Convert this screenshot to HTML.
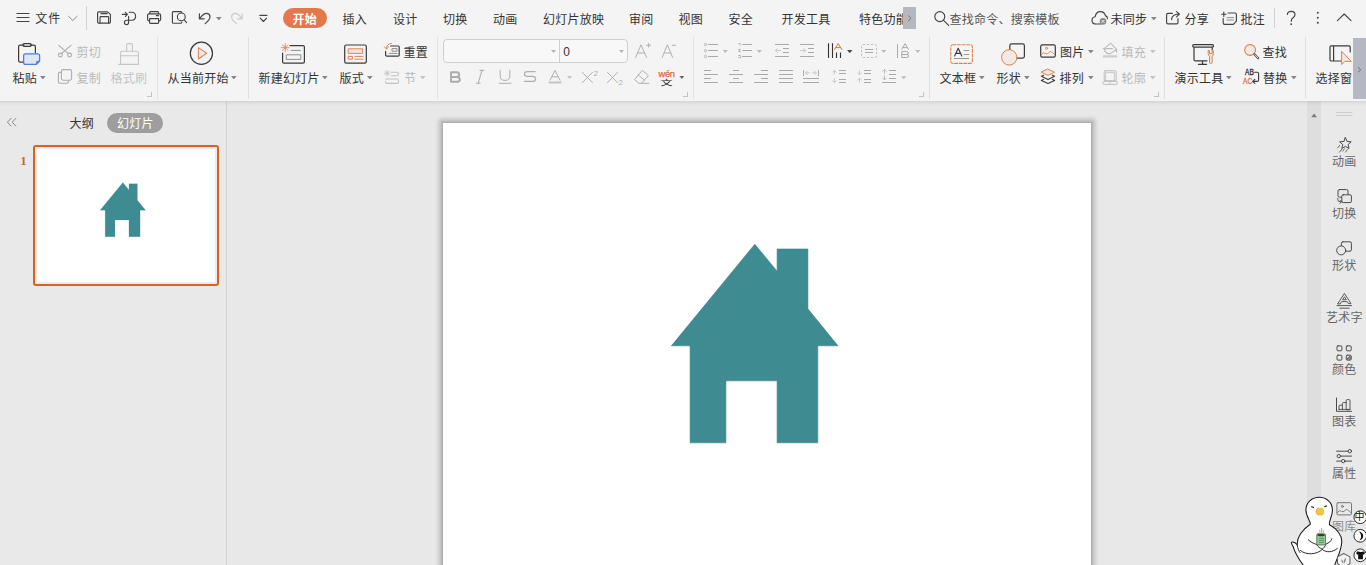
<!DOCTYPE html>
<html lang="zh-CN">
<head>
<meta charset="utf-8">
<title>WPS 演示</title>
<style>
html,body{margin:0;padding:0}
body{width:1366px;height:565px;overflow:hidden;position:relative;background:#e8e8e8;font-family:"Liberation Sans","Noto Sans CJK SC",sans-serif;font-size:12px;color:#333}
#ribbon{position:absolute;left:0;top:0;width:1366px;height:101px;background:#f4f4f4}
#rsh{position:absolute;left:0;top:101px;width:1366px;height:5px;background:linear-gradient(rgba(0,0,0,.085),rgba(0,0,0,.03) 50%,rgba(0,0,0,0))}
.t{position:absolute;white-space:nowrap;line-height:16px;height:16px;font-size:12px;color:#333;letter-spacing:.25px}
.d{color:#b9b9b9}
.g{color:#666}
svg{position:absolute;overflow:visible}
.sep{position:absolute;width:1px;background:#e0e0e0;top:37px;height:62px}
.arr{position:absolute;width:5.6px;height:3.4px;background:#858585;clip-path:polygon(0 0,100% 0,50% 100%)}
.arr.d{background:#c4c4c4}
.arr.k{background:#444}
.cm{position:absolute;width:4px;height:4px;border-right:1px solid #c4c4c4;border-bottom:1px solid #c4c4c4}
#left{position:absolute;left:0;top:101px;width:226px;height:464px;background:#e9e9e9;border-right:1px solid #d4d4d4}
#slide{position:absolute;left:443px;top:123px;width:648px;height:486px;background:#fff;}
.sh{position:absolute}
#vscroll{position:absolute;left:1307px;top:101px;width:14px;height:464px;background:#dedede}
#right{position:absolute;left:1321px;top:101px;width:45px;height:464px;background:#e9e9e9}
</style>
</head>
<body>
<div id="left"></div>
<div class="sh" style="left:443px;top:115px;width:648px;height:8px;background:linear-gradient(to top,rgba(0,0,0,.27),rgba(0,0,0,.15) 30%,rgba(0,0,0,.06) 65%,rgba(0,0,0,0))"></div>
<div class="sh" style="left:435px;top:123px;width:8px;height:442px;background:linear-gradient(to left,rgba(0,0,0,.27),rgba(0,0,0,.15) 30%,rgba(0,0,0,.06) 65%,rgba(0,0,0,0))"></div>
<div class="sh" style="left:1091px;top:123px;width:8px;height:442px;background:linear-gradient(to right,rgba(0,0,0,.27),rgba(0,0,0,.15) 30%,rgba(0,0,0,.06) 65%,rgba(0,0,0,0))"></div>
<div class="sh" style="left:435px;top:115px;width:8px;height:8px;background:radial-gradient(circle at 100% 100%,rgba(0,0,0,.27),rgba(0,0,0,.15) 2.4px,rgba(0,0,0,.06) 5.2px,rgba(0,0,0,0) 8px)"></div>
<div class="sh" style="left:1091px;top:115px;width:8px;height:8px;background:radial-gradient(circle at 0 100%,rgba(0,0,0,.27),rgba(0,0,0,.15) 2.4px,rgba(0,0,0,.06) 5.2px,rgba(0,0,0,0) 8px)"></div>
<div id="slide"></div>
<svg id="house" style="left:0;top:0" width="1366" height="565" viewBox="0 0 1366 565"><path fill="#3e8c92" stroke="#36858c" stroke-width="0.6" d="M671.4 345.8 L754.8 244.2 L777.1 271.2 V249 H807.9 V308.8 L838 345.8 H817.8 V442.8 H777.1 V380.8 H725.9 V442.8 H690.1 V345.8 Z"/></svg>
<div id="vscroll"></div>
<div id="right"></div>
<div id="rsh"></div>
<div id="ribbon">
<!--TOPBAR-START-->
<!-- top bar -->
<svg style="left:0;top:0" width="300" height="36" viewBox="0 0 300 36" fill="none" stroke="#444" stroke-width="1.15" stroke-linecap="round" stroke-linejoin="round">
<path d="M16.5 13.5H29.5M16.5 17.5H29.5M16.5 21.5H29.5" stroke-linecap="butt"/>
<path d="M68.5 16.3L72.8 20.5L77.1 16.3" stroke="#8c8c8c" stroke-width="1"/>
<!-- save -->
<path d="M98.6 11.8H107.6L110.4 14.4V22.1Q110.4 23.1 109.4 23.1H98.6Q97.6 23.1 97.6 22.1V12.8Q97.6 11.8 98.6 11.8Z"/>
<path d="M101 13.6H107.2M100 23V17.4Q100 16.6 100.8 16.6H107.8Q108.6 16.6 108.6 17.4V23"/>
<!-- pdf -->
<path d="M122.3 14.3H127.2M125.4 12.3L127.4 14.3L125.4 16.3"/>
<path d="M128.6 22.4V16.4M129.2 12.2H131.6Q135.6 12.2 135.6 16.2Q135.6 20.2 131.6 20.2H126.8Q124.4 20.2 124.4 22.4Q124.4 24.6 126.5 24.6Q128.6 24.6 128.6 22.4"/>
<!-- print -->
<path d="M149.8 13.6V12.4Q149.8 11.6 150.6 11.6H157.6Q158.4 11.6 158.4 12.4V13.6"/>
<path d="M149.4 20.8H148.8Q147.6 20.8 147.6 19.6V15Q147.6 13.8 148.8 13.8H159.4Q160.6 13.8 160.6 15V19.6Q160.6 20.8 159.4 20.8H158.8"/>
<path d="M149.6 18.6H158.6V22.4Q158.6 23.4 157.6 23.4H150.6Q149.6 23.4 149.6 22.4Z M156.4 15.6H158.6"/>
<!-- preview -->
<path d="M181.8 12.6V12.6Q181.8 11.6 180.8 11.6H173.4Q172.4 11.6 172.4 12.6V22.2Q172.4 23.2 173.4 23.2H180.8Q181.6 23.2 181.8 22.4"/>
<circle cx="181.3" cy="16.9" r="3.9"/>
<path d="M184.2 19.8L186.6 22.6"/>
<!-- undo -->
<path d="M199.4 13.8V18.8H204.2"/>
<path d="M199.8 18.4Q203.4 13.2 207 13.4Q210 13.8 210 17Q210 19.6 205.2 23.6"/>
<!-- redo -->
<g stroke="#cbcbcb" transform="translate(-0.8 0)"><path d="M243 13.8V18.8H238.2"/><path d="M242.6 18.4Q239 13.2 235.4 13.4Q232.4 13.8 232.4 17Q232.4 19.6 237.2 23.6"/></g>
<!-- more -->
<path d="M259.8 15.3H267 M260.2 18.2L263.4 21.5L266.6 18.2"/>
</svg>
<div class="t" style="left:35.3px;top:11px;letter-spacing:1px">文件</div>
<div style="position:absolute;left:86px;top:6px;width:1px;height:24px;background:#d2d2d2"></div>
<div class="arr" style="left:216px;top:17px"></div>
<div style="position:absolute;left:283px;top:8px;width:44px;height:20px;border-radius:10px;background:#e4784b"></div>
<div class="t" style="left:292.5px;top:11.5px;color:#fff;font-weight:bold">开始</div>
<div class="t" style="left:342.5px;top:11.5px">插入</div>
<div class="t" style="left:393px;top:11.5px">设计</div>
<div class="t" style="left:443px;top:11.5px">切换</div>
<div class="t" style="left:493px;top:11.5px">动画</div>
<div class="t" style="left:543px;top:11.5px">幻灯片放映</div>
<div class="t" style="left:629px;top:11.5px">审阅</div>
<div class="t" style="left:678.5px;top:11.5px">视图</div>
<div class="t" style="left:728.5px;top:11.5px">安全</div>
<div class="t" style="left:781.5px;top:11.5px">开发工具</div>
<div class="t" style="left:859px;top:11.5px;width:44px;overflow:hidden">特色功能</div>
<div style="position:absolute;left:903px;top:7px;width:13px;height:22px;background:#b5b7c1"></div>
<svg style="left:903px;top:7px" width="13" height="22" viewBox="0 0 13 22" fill="none" stroke="#777" stroke-width="1"><path d="M5.2 8.4L8 11.2L5.2 14"/></svg>
<svg style="left:920px;top:0" width="446" height="36" viewBox="920 0 446 36" fill="none" stroke="#444" stroke-width="1.15" stroke-linecap="round" stroke-linejoin="round">
<circle cx="939.8" cy="16.6" r="5"/><path d="M943.6 20.4L948.6 25.4"/>
<!-- cloud -->
<path d="M1101 24H1096.4Q1092 24 1092 20.4Q1092 17.2 1095.2 16.8Q1095.8 11.6 1100.4 11.6Q1104.4 11.6 1105.4 15.6Q1107.6 16.4 1107.4 18.6"/>
<circle cx="1103" cy="21.4" r="3.3" fill="#8a8a8a" stroke="none"/>
<path d="M1101.8 20.2L1104.2 22.6M1104.2 20.2L1101.8 22.6" stroke="#f4f4f4" stroke-width="0.9"/>
<!-- share -->
<path d="M1172.4 13.4H1168Q1166.6 13.4 1166.6 14.8V22.4Q1166.6 23.8 1168 23.8H1176.6Q1178 23.8 1178 22.4V18.6"/>
<path d="M1171.6 19.6Q1171.8 14.4 1178.8 14M1176.4 11.6L1179.4 14L1176.6 16.8"/>
<!-- comment -->
<path d="M1221.6 14.2H1226M1223.8 12V16.4"/>
<path d="M1228 13H1235Q1236.4 13 1236.4 14.4V21.2L1233.4 24.4H1224.6Q1223.2 24.4 1223.2 23V18.4"/>
<path d="M1227 20H1233.6M1227 17.6H1233.6" stroke-width="0.8" stroke="#777"/>
<!-- help -->
<path d="M1287.4 14.4Q1287.6 11.4 1291.2 11.4Q1295 11.4 1295 14.6Q1295 16.4 1293 17.8Q1291.2 19 1291.2 21.2" stroke-width="1.2"/>
<circle cx="1291.2" cy="24.2" r="0.9" fill="#444" stroke="none"/>
<g fill="#444" stroke="none"><circle cx="1317.8" cy="12.8" r="1"/><circle cx="1317.8" cy="17.8" r="1"/><circle cx="1317.8" cy="22.8" r="1"/></g>
<path d="M1337.4 20.6L1344.2 14L1351 20.6"/>
</svg>
<div class="t" style="left:949.5px;top:11.5px;color:#555">查找命令、搜索模板</div>
<div class="t" style="left:1110.5px;top:11.5px">未同步</div>
<div class="arr" style="left:1151px;top:17px"></div>
<div class="t" style="left:1184.5px;top:11.5px">分享</div>
<div class="t" style="left:1240.5px;top:11.5px">批注</div>
<div style="position:absolute;left:1274px;top:8px;width:1px;height:20px;background:#d2d2d2"></div>
<!--TOPBAR-END-->
<!--R1-START-->
<!-- ribbon group 1: clipboard -->
<svg style="left:0;top:36px" width="250" height="65" viewBox="0 36 250 65" fill="none" stroke="#3a3a3a" stroke-width="1.2" stroke-linecap="round" stroke-linejoin="round">
<!-- paste -->
<path d="M24 45.2H20.2Q18.6 45.2 18.6 46.8V60.6Q18.6 62.2 20.2 62.2H23"/>
<path d="M30.4 45.2H33.8Q35.4 45.2 35.4 46.8V53"/>
<rect x="23" y="43.6" width="8.2" height="2.8" rx="1.2"/>
<path d="M25.6 53.8H37.6Q39.6 53.8 39.6 55.8V61L36.4 64.4H25.6Q23.6 64.4 23.6 62.4V55.8Q23.6 53.8 25.6 53.8Z" fill="#dfe6f3" stroke="#4a80dc" stroke-width="1.3"/>
<path d="M39.4 61.2H37.2Q36.4 61.2 36.4 62V64.2Z" fill="#4a80dc" stroke="#4a80dc" stroke-width="0.6"/>
<!-- scissors -->
<g stroke="#adadad" stroke-width="1.1"><path d="M58.8 45.4L68.4 53.6M71 45.4L61.4 53.6"/><circle cx="60.4" cy="55" r="1.9"/><circle cx="69.6" cy="55" r="1.9"/></g>
<!-- copy -->
<g stroke="#adadad" stroke-width="1.1"><rect x="61.4" y="69.6" width="10.2" height="10.6" rx="1.6"/><path d="M61.2 72.4H59.8Q58.4 72.4 58.4 73.8V81.8Q58.4 83.2 59.8 83.2H67Q68.4 83.2 68.4 81.8V80.4"/></g>
<!-- format brush -->
<g stroke="#c6c6c6" stroke-width="1.1"><path d="M126.6 51.2V44.8Q126.6 43.6 127.8 43.6H131.2Q132.4 43.6 132.4 44.8V51.2"/><path d="M120.6 64.2V52.4Q120.6 51.2 121.8 51.2H137.2Q138.4 51.2 138.4 52.4V64.2M120.6 55.8H138.4M118.6 64.4H138.6"/></g>
<!-- play -->
<circle cx="201.4" cy="53.3" r="11.1" stroke="#3a3a3a" stroke-width="1.2"/>
<path d="M198.4 47.6V59L206.6 53.3Z" fill="#f6e8e1" stroke="#e0875c" stroke-width="1.1"/>
</svg>
<div class="t" style="left:12.5px;top:71px">粘贴</div><div class="arr" style="left:40px;top:76px"></div>
<div class="t d" style="left:76.5px;top:45px">剪切</div>
<div class="t d" style="left:76.5px;top:71px">复制</div>
<div class="t d" style="left:110.5px;top:71px;color:#c4c4c4">格式刷</div>
<div class="cm" style="left:147px;top:92px"></div>
<div class="sep" style="left:157px"></div>
<div class="t" style="left:167.5px;top:71px">从当前开始</div><div class="arr" style="left:231px;top:76px"></div>
<div class="sep" style="left:248px"></div>
<!--R1-END-->
<!--R2-START-->
<!-- ribbon group 2: slides -->
<svg style="left:250px;top:36px" width="190" height="65" viewBox="250 36 190 65" fill="none" stroke="#3a3a3a" stroke-width="1.2" stroke-linecap="round" stroke-linejoin="round">
<!-- new slide -->
<path d="M290 45.6H303Q304.4 45.6 304.4 47V61.8Q304.4 63.2 303 63.2H284Q282.6 63.2 282.6 61.8V53"/>
<path d="M291 50.4H300.4" stroke="#8e8e8e" stroke-width="1"/>
<rect x="286.6" y="54.8" width="14.2" height="4.6" stroke="#8e8e8e" stroke-width="1"/>
<path d="M285.2 43.6V51.8M281.2 47.7H289.2M282.4 44.9L288 50.5M288 44.9L282.4 50.5" stroke="#e08356" stroke-width="0.9"/>
<!-- layout -->
<rect x="344.7" y="45" width="21.6" height="18.2" rx="1.6"/>
<rect x="348.6" y="48.8" width="14" height="4.6" fill="#f3e6df" stroke="#e08356" stroke-width="1"/>
<rect x="348.6" y="56.4" width="3.8" height="2.8" stroke="#e08356" stroke-width="1"/>
<path d="M355 56.4H363M355 59.2H363" stroke="#e08356" stroke-width="1"/>
<!-- reset -->
<path d="M390.6 46H398Q399.2 46 399.2 47.2V55Q399.2 56.2 398 56.2H386.8Q385.6 56.2 385.6 55V51.4"/>
<rect x="392.4" y="48.6" width="4.6" height="2.6" stroke="#8e8e8e" stroke-width="1"/>
<path d="M389.2 53.4H397" stroke="#8e8e8e" stroke-width="1"/>
<path d="M391.4 43.4Q386.6 43.6 386.4 48.6M384.4 46.8L386.4 49L388.6 47" stroke="#e08356" stroke-width="1"/>
<!-- section (disabled) -->
<g stroke="#c2c2c2" stroke-width="1.1">
<path d="M387.2 70.4V76M384.4 73.2H390M385.2 71.2L389.2 75.2M389.2 71.2L385.2 75.2" stroke-width="0.8"/>
<path d="M391.4 72.2H397.2Q398.4 72.2 398.4 73.4V74.6Q398.4 75.8 397.2 75.8H391.4"/>
<path d="M385.6 79H397.2Q398.4 79 398.4 80.2V82.2Q398.4 83.4 397.2 83.4H386.8Q385.6 83.4 385.6 82.2V81.4"/>
</g>
</svg>
<div class="t" style="left:258.5px;top:71px">新建幻灯片</div><div class="arr" style="left:322px;top:76px"></div>
<div class="t" style="left:339.5px;top:71px">版式</div><div class="arr" style="left:367px;top:76px"></div>
<div class="t" style="left:403.5px;top:45px">重置</div>
<div class="t d" style="left:404px;top:71px">节</div><div class="arr d" style="left:420px;top:76px"></div>
<div class="sep" style="left:437px"></div>
<!--R2-END-->
<!--R3-START-->
<!-- ribbon group 3: font -->
<div style="position:absolute;left:443px;top:39px;width:183px;height:22px;border:1px solid #cfcfcf;border-radius:4px;background:#f8f8f8"></div>
<div style="position:absolute;left:559px;top:40px;width:1px;height:22px;background:#cfcfcf"></div>
<div class="arr" style="left:551px;top:50px;width:5px;height:3px;background:#b4b4b4"></div>
<div class="arr" style="left:619px;top:50px;width:5px;height:3px;background:#b4b4b4"></div>
<div class="t" style="left:563.3px;top:44px;font-size:12px">0</div>
<svg style="left:440px;top:36px" width="255" height="65" viewBox="440 36 255 65" fill="none" stroke="#b0b0b0" stroke-width="1" stroke-linecap="round" stroke-linejoin="round">
<!-- A+ A- -->
<path d="M635.6 57.4L641 44.8L646.6 57.4M637.6 53H644.6M646.6 45.3H650.6M648.6 43.4V47.2"/>
<path d="M662.2 57.4L667.4 44.8L672.6 57.4M664 53H670.8M672.2 45.3H675.6"/>
<!-- B -->
<path d="M451 72.2H456.4Q459.2 72.2 459.2 74.6Q459.2 77 456.4 77H451M451 77H456.8Q459.8 77 459.8 79.4Q459.8 81.8 456.8 81.8H451V72.2Z" stroke-width="1.9" stroke="#ababab"/>
<!-- I -->
<path d="M480 70.4H483.8M476.4 83.2H480.2M481.9 70.4L478.3 83.2" stroke-width="1.1"/>
<!-- U -->
<path d="M500.2 70.2V76Q500.2 80.4 505 80.4Q509.8 80.4 509.8 76V70.2M499.2 83.3H511" />
<!-- S -->
<path d="M535.2 71.6H527.4Q524.4 71.6 524.4 74Q524.4 76.4 527.4 76.4H532.6Q535.6 76.4 535.6 78.9Q535.6 81.4 532.6 81.4H524.4" stroke-width="1.2"/>
<!-- A color -->
<path d="M550 80.2L555 70.4L560 80.2M551.8 76.8H558.2"/>
<path d="M549.4 82.5H560.6" stroke-width="2.2" stroke="#c4c4c4"/>
<!-- X2 -->
<path d="M582.4 72.4L592.4 82.6M592.4 72.4L582.4 82.6"/>
<path d="M607.4 72.4L617.4 82.6M617.4 72.4L607.4 82.6"/>
<!-- eraser -->
<path d="M642.6 70.6L648.4 75.6L641.6 83.2H638.6L634.8 79.8ZM638 74.8L644.6 80.2M641.6 83.3H648.8"/>
<!-- wen underline -->
</svg>
<div class="t" style="left:593.5px;top:66.3px;font-size:8px;color:#b0b0b0">2</div>
<div class="t" style="left:618.4px;top:74.5px;font-size:8px;color:#b0b0b0">2</div>
<div class="t" style="left:658.6px;top:65.6px;font-size:9.3px;color:#d56f38;letter-spacing:-0.35px;-webkit-text-stroke:.25px #d56f38">wén</div>
<div class="t" style="left:660.5px;top:70.8px;font-size:12px;color:#222;transform:scaleY(.58);transform-origin:50% 100%">文</div>
<div class="arr d" style="left:567px;top:76px;width:5px;height:3px"></div>
<div class="arr k" style="left:679px;top:75.5px;background:#666"></div>
<div class="cm" style="left:683px;top:92px"></div>
<div class="sep" style="left:693px"></div>
<!--R3-END-->
<!--R4-START-->
<!-- ribbon group 4: paragraph -->
<svg style="left:695px;top:36px" width="235" height="65" viewBox="695 36 235 65" fill="none" stroke="#a9a9a9" stroke-width="1" stroke-linecap="butt" stroke-linejoin="round">
<!-- bullets -->
<g stroke-width="0.8"><circle cx="705.5" cy="44.5" r="1.2"/><circle cx="705.5" cy="50.5" r="1.2"/><circle cx="705.5" cy="56.5" r="1.2"/></g>
<path d="M708.2 44.5H718M708.2 50.5H718M708.2 56.5H718"/>
<!-- numbering -->
<path d="M738.2 43.6H740.2V45.8M738.2 49.4H740.8M738.2 51.6H740.8M739.5 49.4V51.6M738.2 55.4H740.6V57.6H738.2" stroke-width="0.8"/>
<path d="M742.2 44.5H752M742.2 50.5H752M742.2 56.5H752"/>
<!-- outdent -->
<path d="M775 44.5H789M783 48.5H789M783 52.5H789M775 56.5H789"/>
<path d="M775.4 50.5H781M777.6 48.2L775.3 50.5L777.6 52.8" stroke="#c4c4c4" stroke-width="0.9"/>
<!-- indent -->
<path d="M800 44.5H814M808 48.5H814M808 52.5H814M800 56.5H814"/>
<path d="M800 50.5H805.6M803.4 48.2L805.7 50.5L803.4 52.8" stroke="#c4c4c4" stroke-width="0.9"/>
<!-- text direction -->
<path d="M828.5 43.2V58M832.5 43.2V58M836.5 52.4V58M840.5 52.4V58" stroke="#333" stroke-width="1.1"/>
<path d="M834.4 49.8L838.2 43.6L842 49.8M835.6 47.6H840.8" stroke="#d9763f" stroke-width="1"/>
<!-- align text box -->
<rect x="861.5" y="44.5" width="15" height="13" rx="1.5" stroke="#c2c2c2" stroke-dasharray="2.4 1.6"/>
<path d="M865 49.5H873M865 52.5H873"/>
<!-- |AB -->
<path d="M897.5 44.2V58"/>
<path d="M901.6 49.6L905.1 43.6L908.6 49.6M902.8 47.6H907.4"/>
<path d="M901.8 51.5H906.4Q908.4 51.5 908.4 53Q908.4 54.5 906.4 54.5H901.8M901.8 54.5H906.6Q908.7 54.5 908.7 56Q908.7 57.5 906.6 57.5H901.8V51.5"/>
<!-- row 2 aligns -->
<path d="M704 70.5H711M704 74.5H718M704 78.5H711M704 82.5H718"/>
<path d="M733 70.5H739M729 74.5H743M733 78.5H739M729 82.5H743"/>
<path d="M761 70.5H768M754 74.5H768M761 78.5H768M754 82.5H768"/>
<path d="M779 70.5H793M779 74.5H793M779 78.5H793M779 82.5H793"/>
<path d="M803.5 70V76M818.5 70V76" stroke-width="1"/>
<path d="M803 78.5H819M803 82.5H819"/>
<path d="M805.6 72.8H809.8M807.6 70.8L805.6 72.8L807.6 74.8M812.2 72.8H816.4M814.4 70.8L816.4 72.8L814.4 74.8" stroke="#c4c4c4" stroke-width="0.9"/>
<!-- line spacing 1 -->
<path d="M839 70.5H846M839 73.5H846M839 79.5H846M839 82.5H846"/>
<path d="M834.4 70.6V74.8M832.2 72.6L834.4 70.4L836.6 72.6M834.4 78.2V82.4M832.2 80.4L834.4 82.6L836.6 80.4" stroke="#c4c4c4" stroke-width="0.9"/>
<!-- line spacing 2 -->
<path d="M864 70.5H871M864 73.5H871M864 79.5H871M864 82.5H871"/>
<path d="M859.5 70.4V74.6M857.3 72.6L859.5 74.8L861.7 72.6M859.5 78.4V82.6M857.3 80.4L859.5 78.2L861.7 80.4" stroke="#c4c4c4" stroke-width="0.9"/>
<!-- line spacing 3 -->
<path d="M889 70.5H896M889 74.5H896M889 78.5H896M882 82.5H896"/>
<path d="M884.5 69.6V73.8M882.3 71.6L884.5 69.4L886.7 71.6M884.5 75.4V79.8M882.3 77.8L884.5 80L886.7 77.8" stroke="#b8b8b8" stroke-width="0.9"/>
</svg>
<div class="arr d" style="left:722.5px;top:50px;width:5.5px;height:3px;background:#bdbdbd"></div>
<div class="arr d" style="left:756.5px;top:50px;width:5.5px;height:3px;background:#bdbdbd"></div>
<div class="arr k" style="left:847px;top:50px;width:5.5px;height:3.2px;background:#4a4a4a"></div>
<div class="arr d" style="left:881px;top:50px;width:5.5px;height:3px;background:#bdbdbd"></div>
<div class="arr d" style="left:915px;top:50px;width:5.5px;height:3px;background:#bdbdbd"></div>
<div class="arr d" style="left:901px;top:76.2px;width:5.5px;height:3px;background:#bdbdbd"></div>
<div class="cm" style="left:919px;top:92px"></div>
<div class="sep" style="left:929px"></div>
<!--R4-END-->
<!--R5-START-->
<!-- ribbon group 5: drawing -->
<svg style="left:930px;top:36px" width="436" height="65" viewBox="930 36 436 65" fill="none" stroke="#3a3a3a" stroke-width="1.2" stroke-linecap="round" stroke-linejoin="round">
<!-- text box -->
<rect x="950.8" y="44.8" width="21.6" height="18.6" rx="2" stroke="#d9824f" stroke-width="1.1" stroke-dasharray="3 1.6"/>
<path d="M954.6 56L958.2 48.2L961.8 56M955.8 53.4H960.6" stroke-width="1.1"/>
<path d="M964 50.5H968.8M964 54.5H968.8M954.2 58.5H968.8" stroke="#9a9a9a" stroke-width="1"/>
<!-- shapes -->
<rect x="1009.8" y="43.9" width="14.6" height="14.2" rx="1.8"/>
<circle cx="1009.3" cy="57.4" r="7.7" fill="#f3e9e4" stroke="#d9824f" stroke-width="1"/>
<!-- picture -->
<rect x="1040.7" y="44.8" width="14.6" height="12.4" rx="1.6"/>
<circle cx="1046.5" cy="48.3" r="1.1" stroke="#d9824f" stroke-width="0.9"/>
<path d="M1041.4 54.6Q1043.4 51.6 1045.4 53.4Q1047 54.8 1048.4 53Q1050.4 50.2 1052.4 52.4L1054.8 54.8" stroke="#d9824f" stroke-width="0.9"/>
<!-- arrange -->
<path d="M1048 69.2L1054.6 72.3L1048 75.4L1041.4 72.3Z" fill="#f6e6dd" stroke="#d9824f" stroke-width="1"/>
<path d="M1043.6 75.2L1041.4 76.3L1048 79.5L1054.6 76.3L1052.4 75.2M1043.6 79.3L1041.4 80.4L1048 83.6L1054.6 80.4L1052.4 79.3" stroke-width="1.1"/>
<!-- fill (disabled) -->
<g stroke="#bdbdbd" stroke-width="1.1">
<path d="M1110.6 43.2L1116.4 49.2L1110.4 53.6H1107.6Q1103.8 51.6 1104.6 48.4ZM1103.2 48.6H1112.4M1116.6 49.4V52.2"/>
<path d="M1104 56.4H1116" stroke="#cdcdcd" stroke-width="2.4"/>
</g>
<!-- outline (disabled) -->
<g stroke="#bdbdbd" stroke-width="1">
<rect x="1104.2" y="70.8" width="12" height="10.2" rx="1"/><rect x="1106" y="72.6" width="8.4" height="8.4" stroke-width="0.8"/>
<rect x="1102.8" y="81.2" width="14.6" height="3.2" rx="1.6"/><path d="M1108.6 84.2L1111.6 81.4" stroke-width="0.8"/>
</g>
<!-- presentation tool -->
<rect x="1192.7" y="44.6" width="20.8" height="2.6" rx="1.2"/>
<path d="M1194 47.4V59.4Q1194 60.8 1195.4 60.8H1207M1212.2 47.4V50M1202.5 61V64.2M1198.4 64.3H1206.6"/>
<path d="M1208.2 50.8V53.6Q1208.2 55.4 1209.5 56.4V62.2Q1209.5 63.5 1210.8 63.5Q1212.1 63.5 1212.1 62.2V56.4Q1213.4 55.4 1213.4 53.6V50.8H1212.1V53.6H1209.5V50.8Z" fill="#f6e6dd" stroke="#d9824f" stroke-width="1"/>
<!-- find -->
<circle cx="1250.1" cy="50" r="5.4" fill="#f3e9e4" stroke="#d9824f" stroke-width="1.1"/>
<path d="M1254.4 54.2L1258.2 58.2" stroke-width="2.2" stroke="#555"/>
<path d="M1254.8 54.6L1257.8 57.8" stroke-width="0.8" stroke="#f4f4f4"/>
<!-- replace -->
<path d="M1254.6 72.2H1257.2Q1258.6 72.2 1258.6 73.6V80Q1258.6 81.4 1257.2 81.4H1253M1254.8 79.4L1252.6 81.4L1254.8 83.4" stroke-width="1.1"/>
<!-- select pane -->
<path d="M1349 45.8Q1350.2 45.8 1350.2 47V52M1341 61H1331.2Q1330 61 1330 59.8V47Q1330 45.8 1331.2 45.8H1349M1333.6 46V61" />
<path d="M1341.6 51.6V64.6L1344.8 61.4H1350.8Z" fill="#f6e6dd" stroke="#d9824f" stroke-width="1"/>
</svg>
<div class="t" style="left:1245px;top:64.3px;font-size:8.6px;color:#333;-webkit-text-stroke:.35px #333;transform:scaleX(.76);transform-origin:0 0">AB</div>
<div class="t" style="left:1242.8px;top:72.5px;font-size:8.6px;color:#d9763f;-webkit-text-stroke:.35px #d9763f;transform:scaleX(.76);transform-origin:0 0">AC</div>
<div class="t" style="left:939.5px;top:71px">文本框</div><div class="arr" style="left:979px;top:76px"></div>
<div class="t" style="left:996.5px;top:71px">形状</div><div class="arr" style="left:1024px;top:76px"></div>
<div class="t" style="left:1060px;top:45px">图片</div><div class="arr" style="left:1088px;top:50px"></div>
<div class="t" style="left:1059.5px;top:71px">排列</div><div class="arr" style="left:1088px;top:76px"></div>
<div class="t d" style="left:1121.5px;top:45px">填充</div><div class="arr d" style="left:1150px;top:50px"></div>
<div class="t d" style="left:1121.5px;top:71px">轮廓</div><div class="arr d" style="left:1150px;top:76px"></div>
<div class="cm" style="left:1154px;top:92px"></div>
<div class="sep" style="left:1164px"></div>
<div class="t" style="left:1174.5px;top:71px">演示工具</div><div class="arr" style="left:1226px;top:76px"></div>
<div class="t" style="left:1262.5px;top:45px">查找</div>
<div class="t" style="left:1263px;top:71px">替换</div><div class="arr" style="left:1291px;top:76px"></div>
<div class="sep" style="left:1305px"></div>
<div class="t" style="left:1315.5px;top:71px;width:36px;overflow:hidden">选择窗格</div>
<div style="position:absolute;left:1353px;top:38px;width:13px;height:61px;background:#b5b8c2"></div>
<svg style="left:1353px;top:38px" width="13" height="61" viewBox="0 0 13 61" fill="none" stroke="#6f7177" stroke-width="1"><path d="M5 29.4L7.8 31.8L5 34.2"/></svg>
<!--R5-END-->
<!--ROW-->
</div>
<!--LP-START-->
<!-- left panel -->
<svg style="left:0;top:101px" width="226" height="200" viewBox="0 101 226 200" fill="none" stroke-linecap="round" stroke-linejoin="round">
<path d="M11 118.4L7.4 122.2L11 126M15.8 118.4L12.2 122.2L15.8 126" stroke="#7a7a7a" stroke-width="0.9"/>
</svg>
<div class="t" style="left:69.5px;top:115.5px;color:#333">大纲</div>
<div style="position:absolute;left:107px;top:113px;width:56px;height:20px;border-radius:10px;background:#9e9e9e"></div>
<div class="t" style="left:117px;top:115.5px;color:#fff">幻灯片</div>
<div class="t" style="left:20.5px;top:152.5px;color:#d4611c;font-family:'Liberation Serif',serif;font-weight:bold;font-size:12px">1</div>
<div style="position:absolute;left:33px;top:145px;width:182px;height:137.3px;border:2px solid #d9621e;border-radius:3px;background:#ebebeb"></div>
<div style="position:absolute;left:36.6px;top:148.6px;width:178.6px;height:133.6px;background:#fff"></div>
<svg style="left:36px;top:148px" width="180" height="135" viewBox="437.149 117.880 658.239 493.679"><path fill="#3e8c92" stroke="#36858c" stroke-width="0.6" d="M671.4 345.8 L754.8 244.2 L777.1 271.2 V249 H807.9 V308.8 L838 345.8 H817.8 V442.8 H777.1 V380.8 H725.9 V442.8 H690.1 V345.8 Z"/></svg>
<!--LP-END-->
<!--RP-START-->
<!-- right panel -->
<svg style="left:1300px;top:101px" width="66" height="464" viewBox="1300 101 66 464" fill="none" stroke="#4a4a4a" stroke-width="1" stroke-linecap="round" stroke-linejoin="round">
<path d="M1311.2 117.2L1314.1 113.6L1317 117.2Z" fill="#7b7b7b" stroke="none"/>
<path d="M1336.2 112.5H1352M1336.2 115.5H1352" stroke="#c9c9c9" stroke-width="0.9"/>
<!-- animation: star -->
<path d="M1345.4 137.6L1347.1 141.4L1351.2 141.8L1348.1 144.5L1349 148.5L1345.4 146.4L1341.8 148.5L1342.7 144.5L1339.6 141.8L1343.7 141.4Z"/>
<path d="M1339.6 145.4L1337.6 148M1341.8 149.2L1339.4 152.2M1344.6 148.6L1342.6 151.2M1347.4 149.6L1345.6 152" stroke-width="0.8"/>
<!-- transition -->
<rect x="1338" y="189.6" width="10" height="7.6" rx="1.4"/>
<rect x="1341.8" y="194.8" width="9.6" height="7.8" rx="1.4" fill="#e9e9e9"/>
<path d="M1337.8 198.4V199.6Q1337.8 201.8 1340 201.8H1341.4M1340 200.2L1341.6 201.8L1340 203.4" stroke-width="0.9"/>
<!-- shapes -->
<rect x="1341.4" y="241.8" width="10" height="9.4" rx="1.4"/>
<circle cx="1341.2" cy="250.4" r="4.5" fill="#e9e9e9"/>
<!-- wordart -->
<path d="M1337.8 303.6L1344.4 293.4L1351 303.6H1348.4L1347.2 301.6H1341.6L1340.4 303.6ZM1342.8 299.4L1344.4 296.8L1346 299.4Z" stroke-width="0.9"/>
<path d="M1337 305.6H1351.6M1339.8 308.2H1349.2" stroke-width="0.9"/>
<!-- colors -->
<rect x="1337" y="345.9" width="4.9" height="4.9" rx="0.9"/><rect x="1346.3" y="345.9" width="4.9" height="4.9" rx="0.9"/>
<rect x="1337" y="355.2" width="4.9" height="4.9" rx="0.9"/><rect x="1346.3" y="355.2" width="4.9" height="4.9" rx="0.9"/>
<path d="M1347.2 359.2L1350.2 356.2M1349.2 359.6L1350.8 358" stroke-width="1.3" stroke="#666"/>
<!-- chart -->
<path d="M1336.5 398V411.3H1351.7"/>
<path d="M1339 409.4V406Q1339 405.2 1339.8 405.2H1342.4M1342.4 409.4V403.4Q1342.4 402.6 1343.2 402.6H1346.2M1346.2 409.4V400.6Q1346.2 399.6 1347.2 399.6H1349Q1350 399.6 1350 400.6V409.4ZM1339 409.4H1350" stroke-width="0.9"/>
<!-- properties -->
<path d="M1336.6 451.2H1348M1340.6 456.1H1351.6M1336.6 461.1H1341.4M1345 461.1H1351.6"/>
<circle cx="1349.8" cy="451.2" r="1.7"/><circle cx="1338.8" cy="456.1" r="1.7"/><circle cx="1343.2" cy="461.1" r="1.7"/>
<!-- gallery -->
<g stroke="#777"><rect x="1336.9" y="502.7" width="14.6" height="12.2" rx="1"/>
<circle cx="1342.4" cy="506.4" r="1"/>
<path d="M1337.4 512.4Q1339.4 509.6 1341.4 511.2Q1343 512.6 1344.6 510.8Q1346.6 508.4 1348.4 510.2L1351 512.8" stroke-width="0.9"/></g>
</svg>
<div class="t g" style="left:1332px;top:154px">动画</div>
<div class="t g" style="left:1332px;top:206px">切换</div>
<div class="t g" style="left:1332px;top:258px">形状</div>
<div class="t g" style="left:1326px;top:310px">艺术字</div>
<div class="t g" style="left:1332px;top:362px">颜色</div>
<div class="t g" style="left:1332px;top:414px">图表</div>
<div class="t g" style="left:1332px;top:466px">属性</div>
<div class="t g" style="left:1332px;top:519px;color:#8e8e8e">图库</div>
<!-- mascot -->
<svg style="left:1286px;top:490px" width="80" height="75" viewBox="0 0 603 565" fill="none" stroke="#1a1a1a" stroke-width="8" stroke-linecap="round" stroke-linejoin="round">
<path d="M250 55C305 55 350 95 350 150C350 200 322 230 328 262C380 290 425 340 420 395C418 450 390 500 362 580L140 580C110 540 70 480 55 430C45 410 35 395 45 392C60 390 75 400 85 415C80 360 120 300 183 258C188 235 150 200 150 150C150 95 195 55 250 55Z" fill="#fff"/>
<path d="M168 375C185 392 205 402 230 410C240 428 258 440 274 446M345 368C340 386 325 398 300 408C296 425 285 438 274 446M108 455C150 495 235 485 274 448C300 472 352 472 388 440M85 415C88 440 98 462 106 472" stroke-width="7"/>
<path d="M194 126L208 132M292 126L305 120" stroke-width="9"/>
<path d="M228 165C228 140 245 128 256 141C264 130 282 136 285 165C285 185 270 190 256 188C240 190 228 185 228 165Z" fill="#f1c73e" stroke="#dcaa2c" stroke-width="5"/>
<rect x="232" y="330" width="66" height="84" rx="10" fill="#98cc96" stroke="#3f6a3f" stroke-width="6"/>
<ellipse cx="265" cy="340" rx="27" ry="8" fill="#2d3a2d" stroke="none"/>
<path d="M250 365H284M250 380H284M250 395H284" stroke="#4f8a50" stroke-width="6"/>
<path d="M255 302V320M268 288V320M281 303V320" stroke="#666" stroke-width="4"/>
<!-- hexagon -->
<path d="M435 478L482 504V556L435 582L388 556V504Z" fill="#f2f2f2" stroke="#666" stroke-width="8"/>
<path d="M436 555C430 535 440 520 452 510C452 530 448 545 436 555ZM430 552C420 545 415 532 418 522C428 530 432 540 430 552Z" fill="#8a8a8a" stroke="none"/>
<!-- circles -->
<circle cx="560" cy="205" r="48" fill="#fff" stroke-width="7"/>
<circle cx="560" cy="345" r="48" fill="#fff" stroke-width="7"/>
<circle cx="560" cy="492" r="48" fill="#fff" stroke-width="7"/>
<path d="M548 312C590 318 596 368 552 380C572 362 572 332 548 312Z" fill="#111" stroke="none"/>
<path d="M540 462L528 474L538 488L544 484V522H580V484L586 488L596 474L584 462C576 470 552 470 540 462Z" fill="#111" stroke="none"/>
</svg>
<div class="t" style="left:1354.6px;top:510px;font-size:10px;color:#111;line-height:14px;height:14px">中</div>
<!--RP-END-->
</body>
</html>
